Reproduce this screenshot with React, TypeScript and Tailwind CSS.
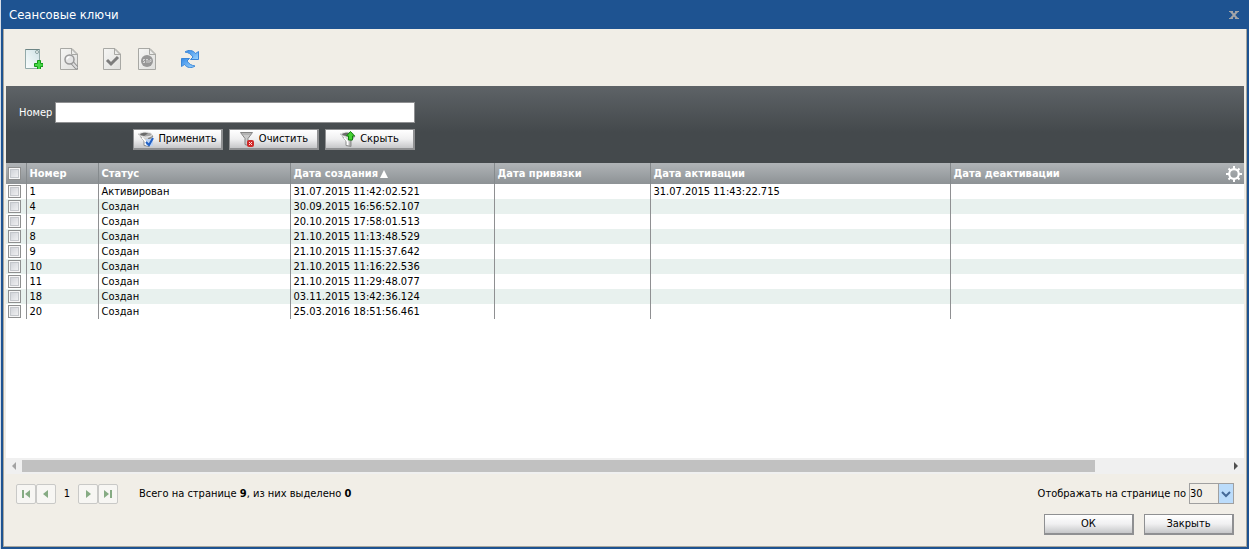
import { useState } from 'react'
import type { ReactNode } from 'react'

type KeyRow = {
  id: number
  status: string
  created: string
  bound?: string
  activated?: string
  deactivated?: string
}

const rows: KeyRow[] = [
  { id: 1, status: 'Активирован', created: '31.07.2015 11:42:02.521', activated: '31.07.2015 11:43:22.715' },
  { id: 4, status: 'Создан', created: '30.09.2015 16:56:52.107' },
  { id: 7, status: 'Создан', created: '20.10.2015 17:58:01.513' },
  { id: 8, status: 'Создан', created: '21.10.2015 11:13:48.529' },
  { id: 9, status: 'Создан', created: '21.10.2015 11:15:37.642' },
  { id: 10, status: 'Создан', created: '21.10.2015 11:16:22.536' },
  { id: 11, status: 'Создан', created: '21.10.2015 11:29:48.077' },
  { id: 18, status: 'Создан', created: '03.11.2015 13:42:36.124' },
  { id: 20, status: 'Создан', created: '25.03.2016 18:51:56.461' },
]

const checkboxClass =
  'block size-[13px] appearance-none border border-[#8e8f8f] bg-linear-to-br from-[#c9ccd2] to-[#f8f8f8] shadow-[inset_0_0_0_1px_#f6f6f6,inset_0_0_0_2px_#c4c7cb] checked:bg-[#1e5391]'

function Sheet({ children }: { children: ReactNode }) {
  return (
    <svg width="18" height="22" viewBox="0 0 18 22" aria-hidden="true">
      <defs>
        <linearGradient id="sheet" x1="0" y1="0" x2="1" y2="1">
          <stop offset="0" stopColor="#f6f6f4" />
          <stop offset="1" stopColor="#dfdfdd" />
        </linearGradient>
      </defs>
      <path d="M.5.5h11.500l5.500 5.500v15.500H.5z" fill="url(#sheet)" stroke="#a8a8a4" />
      <path d="M11.500 1v5.500H17z" fill="#ececea" stroke="#a8a8a4" />
      {children}
    </svg>
  )
}

function NewIcon() {
  return (
    <svg width="18" height="20" viewBox="0 0 18 20" aria-hidden="true">
      <defs>
        <linearGradient id="new-sheet" x1="1" y1="0" x2="0" y2="1">
          <stop offset="0" stopColor="#cfe2e6" />
          <stop offset="1" stopColor="#fbfefe" />
        </linearGradient>
      </defs>
      <path d="M.5.500h14v19h-14z" fill="url(#new-sheet)" stroke="#93aaaa" />
      <path d="M.5.500h14" stroke="#6d8585" />
      <circle cx="12" cy="3" r="1.500" fill="#f2f7f7" stroke="#88a0a0" />
      <path d="M12.500 11.500h3v3h2.500v3h-2.500v3h-3v-3h-3v-3h3z" fill="#45d845" stroke="#149a19" />
    </svg>
  )
}

function ViewIcon() {
  return (
    <Sheet>
      <path d="M12 14.500l4.500 5" stroke="#8d8d8d" strokeWidth="4" strokeLinecap="round" />
      <path d="M12 14.500l4.500 5" stroke="#dcdcdc" strokeWidth="2" strokeLinecap="round" />
      <circle cx="9.500" cy="11.500" r="4.500" fill="#e4e4e4" stroke="#989898" strokeWidth="1.500" />
      <path d="M7 11.500a2.500 2.500 0 0 1 2.500-2.500" fill="none" stroke="#fff" strokeWidth="1.500" />
    </Sheet>
  )
}

function ApproveIcon() {
  return (
    <Sheet>
      <path d="M4 12l4 4L15 9" fill="none" stroke="#7c7c7c" strokeWidth="3" />
    </Sheet>
  )
}

function RevokeIcon() {
  return (
    <Sheet>
      <circle cx="9" cy="13" r="6" fill="#979797" />
      <path d="M5 11.500h2M5 12.500h1M6 13.500h1M5 14.500h2M8 11.500h2M9 12v3M11 12v3M12 11.500h1v2h-1" fill="none" stroke="#d2d2d2" />
    </Sheet>
  )
}

function RefreshIcon() {
  return (
    <svg width="18" height="18" viewBox="0 0 18 18" aria-hidden="true">
      <defs>
        <linearGradient id="refresh" x1="0" y1="0" x2="1" y2="1">
          <stop offset="0" stopColor="#3489e6" />
          <stop offset="1" stopColor="#9bd4ff" />
        </linearGradient>
      </defs>
      <path d="M4 2C7.500-.5 12 0 14.500 3.500L17.500 1.500v8H9.500l2.500-2.500C10 4 7.500 2.500 4 2z" fill="url(#refresh)" stroke="#3b86d8" />
      <path d="M14 16C10.500 18.500 6 18 3.500 14.500L.5 16.500v-8h8L6 11c2 3 4.500 4.500 8 5z" fill="url(#refresh)" stroke="#3b86d8" />
    </svg>
  )
}

// cup seen from above, tapering down to the spout
function Cup() {
  return (
    <>
      <path d="M.5 3L6 10v4.500l5 1V10l4-5z" fill="#d2d2d2" stroke="#8c8c8c" />
      <path d="M10 7l4-1.500-3.500 4.500v5H9.500z" fill="#868686" />
      <path d="M4 6.500l3.500 4v3.500" fill="none" stroke="#fff" strokeWidth="1.500" />
      <ellipse cx="7.500" cy="3.500" rx="6.500" ry="2.500" fill="#a6a6a6" stroke="#ececec" />
      <path d="M2 3.500C4 1.500 8 1.500 10 2.500L6 5z" fill="#6a6a6a" />
    </>
  )
}

function ApplyIcon() {
  return (
    <svg width="16" height="16" viewBox="0 0 16 16" aria-hidden="true">
      <Cup />
      <rect x="8" y="8" width="7" height="7" fill="#bcd2f2" />
      <path d="M8 11l3 3L15 7" fill="none" stroke="#2160c4" strokeWidth="2" />
    </svg>
  )
}

function ClearIcon() {
  return (
    <svg width="16" height="16" viewBox="0 0 16 16" aria-hidden="true">
      <path d="M1.500 1.500h12L9 7.500v7l-3-1v-6z" fill="#c9c9c9" stroke="#858585" />
      <path d="M3 3h9" stroke="#9d9d9d" />
      <rect x="8" y="9" width="7" height="7" rx="2" fill="#cf2a2a" />
      <path d="M10 11l3 3M13 11l-3 3" stroke="#ffdcdc" />
    </svg>
  )
}

function HideIcon() {
  return (
    <svg width="16" height="16" viewBox="0 0 16 16" aria-hidden="true">
      <Cup />
      <path d="M10.500.5l4 4.500h-2v4h-4V5h-2z" fill="#45d232" stroke="#12810f" />
    </svg>
  )
}

function GearIcon() {
  return (
    <svg width="16" height="16" viewBox="0 0 16 16" aria-hidden="true">
      <path d="M8 0v3M8 13v3M0 8h3M13 8h3M2.500 2.500l2 2M11.500 11.500l2 2M13.500 2.500l-2 2M4.500 11.500l-2 2" stroke="#fff" strokeWidth="2" />
      <circle cx="8" cy="8" r="4.800" fill="none" stroke="#fff" strokeWidth="2.200" />
    </svg>
  )
}

function ToolButton({ label, children }: { label: string; children: ReactNode }) {
  return (
    <button type="button" aria-label={label} className="flex size-[22px] items-center justify-center">
      {children}
    </button>
  )
}

function PushButton({ icon, children }: { icon?: ReactNode; children: ReactNode }) {
  return (
    <button
      type="button"
      className="flex h-[21px] w-[90px] items-center justify-center gap-1 border border-r-2 border-b-2 border-[#8f9092] bg-linear-to-b from-white via-[#f0f0f1] to-[#c6c7c9] text-black"
    >
      {icon}
      {children}
    </button>
  )
}

function PageButton({ label, d }: { label: string; d: string }) {
  return (
    <button
      type="button"
      aria-label={label}
      className="flex size-5 items-center justify-center rounded-xs border border-[#c9c9c7] bg-[#f7f6f3]"
    >
      <svg width="10" height="10" viewBox="0 0 10 10" aria-hidden="true">
        <path d={d} fill="#86ab83" />
      </svg>
    </button>
  )
}

export default function App() {
  const [selected, setSelected] = useState<number[]>([])

  const toggle = (id: number) =>
    setSelected((prev) => (prev.includes(id) ? prev.filter((x) => x !== id) : [...prev, id]))

  return (
    <div className="flex min-h-screen flex-col border-l border-[#d5dde8] bg-[#1e5391] pb-[2px] font-['DejaVu_Sans_Condensed','Noto_Sans',sans-serif] text-[11px] leading-[14px] text-black">
      <header className="flex h-[29px] items-center justify-between pr-[10px] pl-2 text-white">
        <h1 className="text-[13px]">Сеансовые ключи</h1>
        <button type="button" aria-label="Закрыть окно" className="text-[#a3a5a8]">
          <svg width="10" height="8" viewBox="0 0 10 8" aria-hidden="true">
            <path d="M1.500 0l7 8M8.500 0l-7 8" stroke="currentColor" strokeWidth="2" />
            <path d="M0 .5h4M6 .5h4M0 7.500h4M6 7.500h4" stroke="currentColor" />
          </svg>
        </button>
      </header>

      <main className="mx-[2px] flex flex-1 flex-col border-x border-b border-[#a9a79f] bg-[#f1eee7] px-[2px]">
        <div className="flex h-[57px] items-center gap-[13px] px-[17px] pt-[2px]">
          <ToolButton label="Создать"><NewIcon /></ToolButton>
          <ToolButton label="Просмотр"><ViewIcon /></ToolButton>
          <div className="ml-2 flex gap-[13px]">
            <ToolButton label="Активировать"><ApproveIcon /></ToolButton>
            <ToolButton label="Деактивировать"><RevokeIcon /></ToolButton>
          </div>
          <div className="ml-2">
            <ToolButton label="Обновить"><RefreshIcon /></ToolButton>
          </div>
        </div>

        <form
          className="bg-linear-to-b from-[#5e6367] to-[#44494c] to-60% pt-4 pb-[13px] pl-[13px]"
          onSubmit={(e) => e.preventDefault()}
        >
          <div className="flex w-[396px] flex-col gap-[6px]">
            <div className="flex items-center gap-[3px]">
              <label htmlFor="number" className="text-white">Номер</label>
              <input id="number" type="text" className="h-[21px] min-w-0 flex-1 border border-[#8f9092] bg-white px-1 text-black outline-none" />
            </div>
            <div className="flex justify-end gap-[6px]">
              <PushButton icon={<ApplyIcon />}>Применить</PushButton>
              <PushButton icon={<ClearIcon />}>Очистить</PushButton>
              <PushButton icon={<HideIcon />}>Скрыть</PushButton>
            </div>
          </div>
        </form>

        <div className="flex-1 bg-white">
          <table className="w-full table-fixed border-collapse">
            <colgroup>
              <col className="w-5" />
              <col className="w-[72px]" />
              <col className="w-[192px]" />
              <col className="w-[204px]" />
              <col className="w-[156px]" />
              <col className="w-[300px]" />
              <col />
            </colgroup>
            <thead>
              <tr className="h-[21px] bg-linear-to-b from-[#b0b4b7] to-[#8d9295] text-left text-white [&>th]:p-0 [&>th+th]:border-l [&>th+th]:border-[#858a8d] [&>th+th]:pt-px [&>th+th]:pl-[3px]">
                <th>
                  <input
                    type="checkbox"
                    aria-label="Выбрать все"
                    checked={selected.length === rows.length}
                    onChange={(e) => setSelected(e.target.checked ? rows.map((r) => r.id) : [])}
                    className={`ml-[2px] ${checkboxClass}`}
                  />
                </th>
                <th>Номер</th>
                <th>Статус</th>
                <th>
                  <div className="flex items-center gap-[2px]">
                    Дата создания
                    <svg width="8" height="8" viewBox="0 0 8 8" aria-hidden="true">
                      <path d="M4 0l4 8H0z" fill="#fff" />
                    </svg>
                  </div>
                </th>
                <th>Дата привязки</th>
                <th>Дата активации</th>
                <th>
                  <div className="flex items-center justify-between pr-[2px]">
                    Дата деактивации
                    <button type="button" aria-label="Настройка столбцов"><GearIcon /></button>
                  </div>
                </th>
              </tr>
            </thead>
            <tbody>
              {rows.map((row) => (
                <tr key={row.id} className="h-[15px] even:bg-[#e8f1ee] [&>td]:p-0 [&>td+td]:border-l [&>td+td]:border-[#8f9092] [&>td+td]:pt-px [&>td+td]:pl-[3px]">
                  <td>
                    <input
                      type="checkbox"
                      aria-label={`Ключ ${row.id}`}
                      checked={selected.includes(row.id)}
                      onChange={() => toggle(row.id)}
                      className={`ml-[2px] ${checkboxClass}`}
                    />
                  </td>
                  <td>{row.id}</td>
                  <td>{row.status}</td>
                  <td>{row.created}</td>
                  <td>{row.bound}</td>
                  <td>{row.activated}</td>
                  <td>{row.deactivated}</td>
                </tr>
              ))}
            </tbody>
          </table>
        </div>

        <div className="flex h-4 items-center bg-[#f0f0f0]">
          <svg width="16" height="16" viewBox="0 0 16 16" aria-hidden="true">
            <path d="M10 4v8L6 8z" fill="#a3a3a3" />
          </svg>
          <div className="flex-1">
            <div className="h-3 w-[89%] bg-[#c1c1c1]" />
          </div>
          <svg width="16" height="16" viewBox="0 0 16 16" aria-hidden="true">
            <path d="M6 4v8l4-4z" fill="#505050" />
          </svg>
        </div>

        <footer className="flex flex-col gap-[10px] pt-[9px] pr-[10px] pb-[11px] pl-[10px]">
          <div className="flex items-center">
            <nav className="flex items-center" aria-label="Страницы">
              <PageButton label="Первая" d="M1 1h2v8H1zM9 1v8L4 5z" />
              <PageButton label="Предыдущая" d="M7 1v8L2 5z" />
              <span className="w-[22px] text-center">1</span>
              <PageButton label="Следующая" d="M3 1v8l5-4z" />
              <PageButton label="Последняя" d="M7 1h2v8H7zM1 1v8l5-4z" />
            </nav>
            <p className="ml-[21px]">
              Всего на странице <b>{rows.length}</b>, из них выделено <b>{selected.length}</b>
            </p>
            <div className="ml-auto flex items-center gap-[3px]">
              <label htmlFor="page-size">Отображать на странице по</label>
              <div className="relative">
                <select id="page-size" defaultValue="30" className="block h-[21px] w-[45px] appearance-none border border-[#a0a0a0] bg-[#f1eee7] text-black outline-none">
                  <option>10</option>
                  <option>30</option>
                  <option>50</option>
                </select>
                <span className="pointer-events-none absolute inset-y-0 right-0 flex w-4 items-center justify-center border border-[#a0a0a0] bg-[#bbdcfb]">
                  <svg width="10" height="8" viewBox="0 0 10 8" aria-hidden="true">
                    <path d="M1 2l4 4 4-4" fill="none" stroke="#456a98" strokeWidth="2" />
                  </svg>
                </span>
              </div>
            </div>
          </div>
          <div className="flex justify-end gap-[10px]">
            <PushButton>ОК</PushButton>
            <PushButton>Закрыть</PushButton>
          </div>
        </footer>
      </main>
    </div>
  )
}
